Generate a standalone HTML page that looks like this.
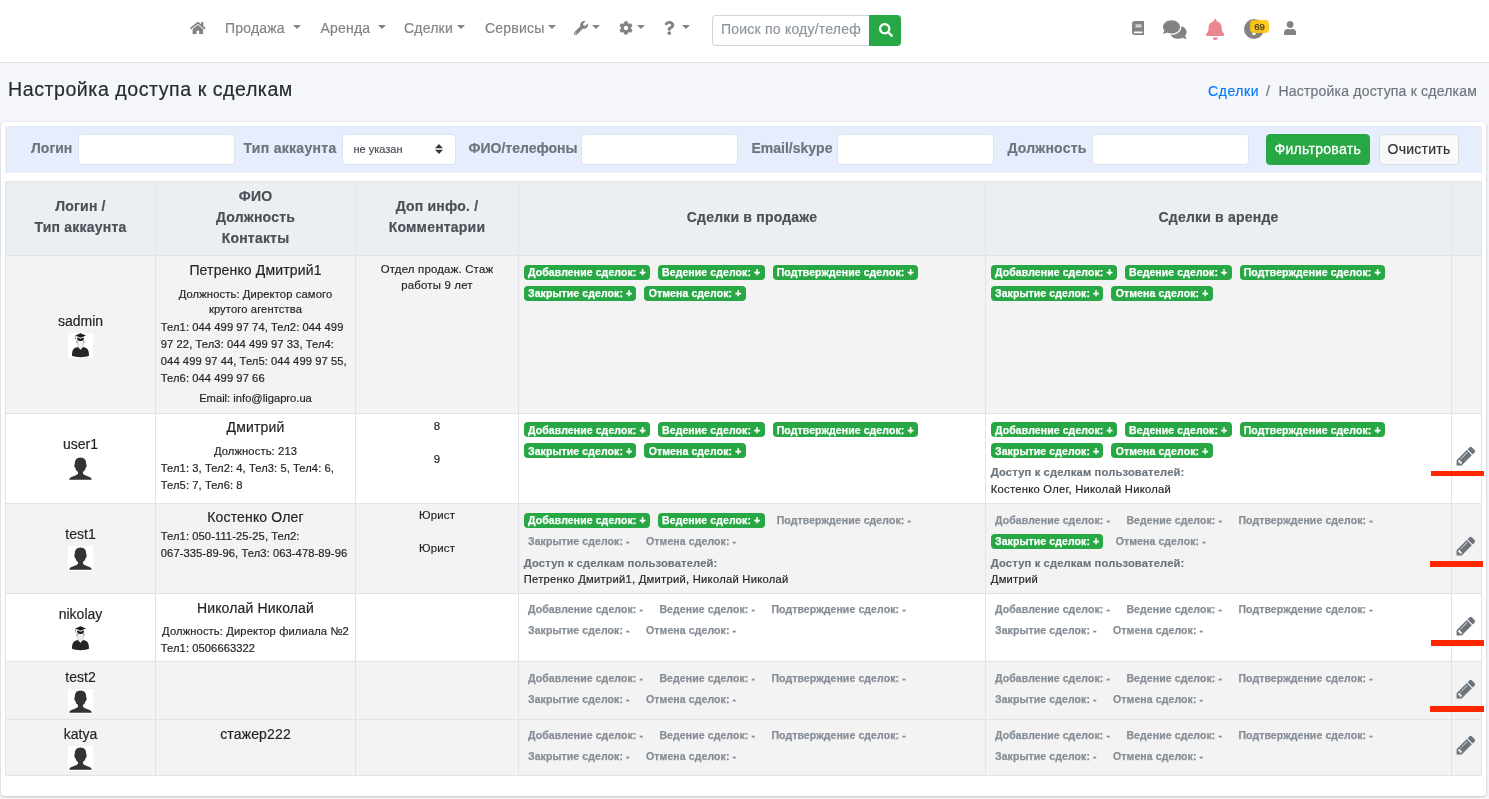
<!DOCTYPE html>
<html lang="ru">
<head>
<meta charset="utf-8">
<title>Настройка доступа к сделкам</title>
<style>
*{box-sizing:border-box}
html,body{margin:0;padding:0}
body{width:1489px;height:799px;overflow:hidden;background:#f4f6f9;font-family:"Liberation Sans",Arial,Helvetica,sans-serif;font-size:14px;line-height:1.5;color:#212529;position:relative;-webkit-text-stroke:.18px currentColor}
.wrap{position:absolute;left:0;top:0;width:1489px;height:799px;will-change:transform}
/* navbar */
.navbar{position:absolute;left:0;top:0;width:1489px;height:63px;background:#fff;border-bottom:1px solid #dee2e6}
.nv{position:absolute;top:18px;height:21px;line-height:21px;color:#838383;white-space:nowrap;font-size:14px;letter-spacing:.2px}
.caret{display:inline-block;width:0;height:0;border-top:4.2px solid #838383;border-left:4.2px solid transparent;border-right:4.2px solid transparent;vertical-align:3.6px;margin-left:3.6px}
.nvi{position:absolute;fill:#838383}
.search{position:absolute;left:712px;top:15px;width:157px;height:31px;border:1px solid #ced4da;border-right:0;border-radius:4px 0 0 4px;background:#fff;color:#8d959c;font-size:14px;line-height:27px;padding-left:8px;white-space:nowrap;overflow:hidden;letter-spacing:.22px}
.sbtn{position:absolute;left:869px;top:15px;width:32px;height:31px;background:#28a745;border-radius:0 4px 4px 0}
.nbadge{position:absolute;left:1250px;top:20px;width:19px;height:13px;border-radius:4px;background:rgba(255,196,12,.9);color:#3a3320;font-size:9.6px;line-height:13px;text-align:center}
/* header */
.title{position:absolute;left:8px;top:73.7px;font-size:19.6px;line-height:30px;color:#272c31;letter-spacing:.54px;white-space:nowrap}
.bc{position:absolute;top:81px;height:21px;line-height:21px;font-size:14px;white-space:nowrap;letter-spacing:.2px}
/* card */
.card{position:absolute;left:1px;top:122px;width:1485px;height:674px;background:#fff;border-radius:4px;box-shadow:0 0 1px rgba(0,0,0,.125),0 1px 3px rgba(0,0,0,.2)}
.filter{position:absolute;left:5px;top:126px;width:1477px;height:47px;background:#e6edfd}
.fl{position:absolute;top:138px;height:21px;line-height:21px;font-weight:700;color:#6c757d;font-size:14px;white-space:nowrap}
.fi{position:absolute;top:134px;height:31px;width:157px;background:#fff;border:1px solid #dde3ec;border-radius:4px}
.btn{position:absolute;top:134px;height:31px;border-radius:4px;font-size:14px;line-height:29px;text-align:center;white-space:nowrap}
.sel span{position:absolute;left:11px;top:-.5px;line-height:29px;font-size:11px;color:#495057}
/* table */
table.t{position:absolute;left:5px;top:181px;width:1476px;border-collapse:collapse;table-layout:fixed;font-size:14px}
.t tr{--d:0px}
.t tr.u1{--d:-1px}
.t tr.u2{--d:-.5px}
.t th,.t td{border:1px solid #e0e4e8;padding:calc(4px + var(--d)) 4.8px 3px;vertical-align:top;text-align:left}
.t th{background:#eceff1;color:#495057;font-weight:700;text-align:center;vertical-align:middle;line-height:21px;padding:3.5px 5px 6.5px;letter-spacing:.2px}
.t tr.g td{background:#f3f3f3}
.t td.c{text-align:center}
.t td.m{vertical-align:middle;text-align:center}
.sm{font-size:11.2px;line-height:16.8px}
.b{display:inline-block;font-size:10.5px;font-weight:700;line-height:10.5px;padding:2.4px 4.2px 2.2px;border-radius:4px;color:#fff;background:#28a745;white-space:nowrap;vertical-align:baseline;margin-right:8px;letter-spacing:.1px;-webkit-text-stroke:.25px currentColor}
.b.n{background:transparent;color:#868e96}

.lg{line-height:21px}
.ic{width:25px;height:25px;display:block;margin:1px auto 0}
.nm{text-align:center;line-height:21px;letter-spacing:.15px}
.pos{text-align:center;line-height:15.7px;margin-top:5.7px;margin-bottom:1.1px;letter-spacing:.12px}
.tel{letter-spacing:.07px;line-height:16.8px}
.tel span{white-space:nowrap}
.em{text-align:center;margin-top:4px;letter-spacing:0}
.t td.com{text-align:center;font-size:11.4px;line-height:16px;padding:calc(5px + var(--d)) 20px 0;letter-spacing:.2px}
.com p{margin:0 0 17px}
.t td.bd{padding-top:calc(4.3px + var(--d))}
.t td.m{padding-bottom:6px}
.t tr.r6 td.m{padding-bottom:4.5px}
.t tr.r1 td.m{padding-bottom:4.6px}
.t tr.r4 td.m{padding-bottom:3px}
.t tr.r5 td.m{padding-top:5px;padding-bottom:5px}
.t tr.r5 td.bd{padding-top:5.3px}
.t tr.r2 td.bd{padding-top:4.5px}
.t tr.r4 td:nth-child(2){padding-top:4px}
.r4 .pos{margin-top:4.7px;margin-bottom:.3px}
.t tr.r3 td.com{padding-top:3.2px}
.t tr.r3 td.bd{padding-top:5px}
.t tr.r1 td.bd{padding-top:5px}
.acc{font-size:11.2px;line-height:16.6px;margin-top:3.5px;letter-spacing:.27px}
.acc b{color:#6c757d;letter-spacing:.14px}
.pen{position:absolute;left:1455.4px;width:22px;height:22px;fill:#6c757d}
.red{position:absolute;background:#ff2600}
</style>
</head>
<body>
<div class="wrap">
<div class="navbar">
<svg class="nvi" style="left:190.2px;top:20.5px;width:15.75px;height:14px" viewBox="0 0 576 512"><path d="M280.37 148.26L96 300.11V464a16 16 0 0 0 16 16l112.060-.29a16 16 0 0 0 15.920-16V368a16 16 0 0 1 16-16h64a16 16 0 0 1 16 16v95.640a16 16 0 0 0 16 16.050L464 480a16 16 0 0 0 16-16V300L295.670 148.260a12.190 12.190 0 0 0-15.300 0zM571.600 251.470L488 182.560V44.050a12 12 0 0 0-12-12h-56a12 12 0 0 0-12 12v72.610L318.470 43a48 48 0 0 0-61 0L4.340 251.470a12 12 0 0 0-1.600 16.900l25.500 31A12 12 0 0 0 45.150 301l235.220-193.740a12.190 12.190 0 0 1 15.300 0L530.900 301a12 12 0 0 0 16.900-1.600l25.500-31a12 12 0 0 0-1.700-16.930z"/></svg>
<div class="nv" style="left:225px">Продажа <span class="caret"></span></div>
<div class="nv" style="left:320.5px">Аренда <span class="caret"></span></div>
<div class="nv" style="left:404px">Сделки<span class="caret"></span></div>
<div class="nv" style="left:485px">Сервисы<span class="caret"></span></div>
<svg class="nvi" style="left:574.4px;top:20.8px;width:14px;height:14px" viewBox="0 0 512 512"><path d="M507.730 109.100c-2.240-9.030-13.540-12.090-20.120-5.510l-74.360 74.360-67.880-11.310-11.310-67.880 74.360-74.360c6.620-6.620 3.430-17.900-5.660-20.160-47.380-11.740-99.550.91-136.580 37.930-39.640 39.640-50.550 97.100-34.050 147.200L18.740 402.760c-24.990 24.990-24.990 65.510 0 90.500 24.990 24.990 65.510 24.990 90.500 0l213.210-213.210c50.120 16.710 107.470 5.680 147.370-34.220 37.070-37.070 49.700-89.320 37.910-136.730zM64 472c-13.250 0-24-10.750-24-24 0-13.260 10.750-24 24-24s24 10.740 24 24c0 13.250-10.750 24-24 24z"/></svg>
<div class="nv" style="left:588.6px"><span class="caret"></span></div>
<svg class="nvi" style="left:619.3px;top:20.6px;width:14px;height:14px" viewBox="0 0 512 512"><path d="M487.400 315.700l-42.600-24.600c4.300-23.200 4.300-47 0-70.200l42.600-24.600c4.900-2.800 7.100-8.600 5.500-14-11.100-35.600-30-67.800-54.700-94.600-3.800-4.100-10-5.100-14.800-2.300L380.800 110c-17.900-15.400-38.500-27.300-60.800-35.100V25.800c0-5.600-3.900-10.500-9.400-11.700-36.700-8.200-74.300-7.800-109.200 0-5.500 1.200-9.400 6.100-9.400 11.700V75c-22.200 7.900-42.800 19.800-60.800 35.100L88.700 85.500c-4.900-2.800-11-1.900-14.800 2.300-24.700 26.700-43.600 58.900-54.700 94.600-1.700 5.400.6 11.200 5.500 14L67.300 221c-4.300 23.200-4.300 47 0 70.200l-42.600 24.600c-4.900 2.800-7.100 8.600-5.500 14 11.100 35.600 30 67.800 54.700 94.600 3.800 4.100 10 5.100 14.800 2.300l42.600-24.600c17.900 15.400 38.500 27.300 60.800 35.100v49.200c0 5.600 3.900 10.500 9.400 11.700 36.700 8.200 74.300 7.800 109.200 0 5.500-1.200 9.400-6.100 9.400-11.700v-49.200c22.200-7.900 42.800-19.800 60.800-35.100l42.600 24.600c4.900 2.800 11 1.900 14.800-2.300 24.700-26.700 43.600-58.900 54.700-94.600 1.500-5.500-.7-11.300-5.600-14.100zM256 336c-44.100 0-80-35.900-80-80s35.900-80 80-80 80 35.900 80 80-35.900 80-80 80z"/></svg>
<div class="nv" style="left:633.2px"><span class="caret"></span></div>
<svg class="nvi" style="left:664.2px;top:20.7px;width:10.5px;height:14px" viewBox="0 0 384 512"><path d="M202.021 0C122.202 0 70.503 32.703 29.914 91.026c-7.363 10.580-5.093 25.086 5.178 32.874l43.138 32.709c10.373 7.865 25.132 6.026 33.253-4.148 25.049-31.381 43.630-49.449 82.757-49.449 30.764 0 68.816 19.799 68.816 49.631 0 22.552-18.617 34.134-48.993 51.164-35.423 19.860-82.299 44.576-82.299 106.405V320c0 13.255 10.745 24 24 24h72.471c13.255 0 24-10.745 24-24v-5.773c0-42.860 125.268-44.645 125.268-160.627C377.504 66.256 286.902 0 202.021 0zM192 373.459c-38.196 0-69.271 31.075-69.271 69.271 0 38.195 31.075 69.270 69.271 69.270s69.271-31.075 69.271-69.271-31.075-69.270-69.271-69.270z"/></svg>
<div class="nv" style="left:678.2px"><span class="caret"></span></div>
<div class="search">Поиск по коду/телеф</div>
<div class="sbtn"><svg style="position:absolute;left:10px;top:8.300px;width:14px;height:14px;fill:#fff" viewBox="0 0 512 512"><path d="M505 442.700L405.300 343c-4.500-4.500-10.600-7-17-7H372c27.600-35.300 44-79.700 44-128C416 93.100 322.900 0 208 0S0 93.100 0 208s93.100 208 208 208c48.300 0 92.700-16.400 128-44v16.300c0 6.400 2.500 12.500 7 17l99.700 99.700c9.400 9.400 24.600 9.400 33.900 0l28.300-28.300c9.400-9.400 9.400-24.600.1-34zM208 336c-70.700 0-128-57.200-128-128 0-70.700 57.200-128 128-128 70.700 0 128 57.200 128 128 0 70.700-57.200 128-128 128z"/></svg></div>
<svg class="nvi" style="left:1131.5px;top:21px;width:12.25px;height:14px" viewBox="0 0 448 512"><path d="M448 360V24c0-13.300-10.700-24-24-24H96C43 0 0 43 0 96v320c0 53 43 96 96 96h328c13.300 0 24-10.700 24-24v-16c0-7.500-3.500-14.300-8.900-18.700-4.200-15.400-4.200-59.300 0-74.700 5.400-4.300 8.900-11.100 8.900-18.600zM128 134c0-3.300 2.700-6 6-6h212c3.300 0 6 2.700 6 6v20c0 3.300-2.700 6-6 6H134c-3.300 0-6-2.700-6-6v-20zm0 64c0-3.300 2.700-6 6-6h212c3.300 0 6 2.700 6 6v20c0 3.300-2.700 6-6 6H134c-3.300 0-6-2.700-6-6v-20zm253.400 250H96c-17.700 0-32-14.300-32-32 0-17.600 14.400-32 32-32h285.400c-1.900 17.100-1.900 46.900 0 64z"/></svg>
<svg class="nvi" style="left:1163px;top:18.5px;width:23.6px;height:21px" viewBox="0 0 576 512"><path d="M416 192c0-88.400-93.100-160-208-160S0 103.600 0 192c0 34.300 14.100 65.900 38 92-13.400 30.200-35.500 54.200-35.800 54.500-2.200 2.300-2.800 5.700-1.500 8.700S4.800 352 8 352c36.600 0 66.900-12.300 88.700-25 32.200 15.700 70.300 25 111.300 25 114.900 0 208-71.600 208-160zm122 220c23.900-26 38-57.700 38-92 0-66.900-53.500-124.200-129.300-148.100.9 6.600 1.300 13.300 1.300 20.100 0 105.900-107.700 192-240 192-10.800 0-21.300-.8-31.700-1.900C207.800 439.600 281.800 480 368 480c41 0 79.100-9.200 111.300-25 21.800 12.700 52.100 25 88.700 25 3.200 0 6.100-1.900 7.300-4.800 1.300-2.900.7-6.300-1.500-8.700-.3-.3-22.400-24.200-35.800-54.500z"/></svg>
<svg class="nvi" style="left:1206px;top:18.5px;width:18.4px;height:21px;fill:#ea868f" viewBox="0 0 448 512"><path d="M224 512c35.320 0 63.970-28.650 63.970-64H160.030c0 35.350 28.650 64 63.970 64zm215.390-149.710c-19.320-20.760-55.470-51.990-55.470-154.290 0-77.700-54.480-139.900-127.940-155.160V32c0-17.670-14.320-32-31.980-32s-31.980 14.330-31.980 32v20.840C118.560 68.100 64.080 130.300 64.080 208c0 102.300-36.150 133.530-55.470 154.290-6 6.450-8.660 14.160-8.610 21.710.11 16.400 12.980 32 32.100 32h383.800c19.120 0 32-15.600 32.100-32 .05-7.550-2.610-15.270-8.610-21.710z"/></svg>
<svg class="nvi" style="left:1244px;top:19px;width:20px;height:20px" viewBox="0 0 20 20"><circle cx="10" cy="10" r="10"/><circle cx="10" cy="14.6" r="1.7" fill="#fff"/><rect x="8.6" y="4" width="2.8" height="7.5" rx="1" fill="#fff"/></svg>
<div class="nbadge">69</div>
<svg class="nvi" style="left:1284px;top:21px;width:12.25px;height:14px" viewBox="0 0 448 512"><path d="M224 256c70.700 0 128-57.300 128-128S294.700 0 224 0 96 57.300 96 128s57.300 128 128 128zm89.600 32h-16.700c-22.200 10.200-46.900 16-72.900 16s-50.600-5.800-72.900-16h-16.700C60.200 288 0 348.200 0 422.400V464c0 26.500 21.500 48 48 48h352c26.500 0 48-21.500 48-48v-41.600c0-74.200-60.200-134.400-134.400-134.400z"/></svg>
</div>
<div class="title">Настройка доступа к сделкам</div>
<div class="bc" style="left:1208px;color:#007bff;letter-spacing:.55px">Сделки</div>
<div class="bc" style="left:1266px;color:#6c757d">/</div>
<div class="bc" style="left:1278.5px;color:#6c757d">Настройка доступа к сделкам</div>
<div class="card"></div>
<div class="filter"></div>
<div class="fl" style="left:31px">Логин</div>
<div class="fi" style="left:77.500px"></div>
<div class="fl" style="left:243.500px;letter-spacing:.3px">Тип аккаунта</div>
<div class="fi sel" style="left:341.500px;width:114px"><span>не указан</span><svg viewBox="0 0 8 10" style="position:absolute;left:92px;top:9px;width:8px;height:10px"><path d="M0 4.200 4 0l4 4.200zM0 5.800 4 10l4-4.200z" fill="#343a40"/></svg></div>
<div class="fl" style="left:468.500px">ФИО/телефоны</div>
<div class="fi" style="left:581px"></div>
<div class="fl" style="left:751.500px">Email/skype</div>
<div class="fi" style="left:836.500px"></div>
<div class="fl" style="left:1007.500px;letter-spacing:.2px">Должность</div>
<div class="fi" style="left:1091.500px"></div>
<div class="btn" style="left:1265.500px;width:104.500px;background:#28a745;border:1px solid #28a745;color:#fff;letter-spacing:.3px;-webkit-text-stroke:.3px #fff">Фильтровать</div>
<div class="btn" style="left:1379px;width:80px;background:#f8f9fa;border:1px solid #ddd;color:#333;letter-spacing:.25px">Очистить</div>
<table class="t"><colgroup><col style="width:150px"><col style="width:200px"><col style="width:163px"><col style="width:467px"><col style="width:466px"><col style="width:30px"></colgroup>
<tr style="height:74px"><th>Логин /<br>Тип аккаунта</th><th>ФИО<br>Должность<br>Контакты</th><th>Доп инфо. /<br>Комментарии</th><th>Сделки в продаже</th><th>Сделки в аренде</th><th></th></tr>
<tr class="g r1" style="height:158px">
<td class="m"><div class="lg">sadmin</div><svg class="ic" viewBox="0 0 25 25"><rect width="25" height="25" fill="#fff"/><path fill="#262626" d="M4 22.800C4 18 5 15.500 8 14.600l2-.7 2.500 2.900 2.500-2.900 2 .7c3 .9 4 3.400 4 8.200-3 1.800-14 1.800-17 0z"/><path fill="#f0f0f0" stroke="#a8a8a8" stroke-width=".5" d="M9.400 7.300c-.4 2.700.2 4.900 1 5.900l-.2.800 2.300 2.600 2.300-2.600-.2-.8c.8-1 1.400-3.200 1-5.900z"/><path fill="#8c8c8c" d="M8.500 7.400h1v3.200c-.7-.5-1.100-1.800-1-3.200zM16.500 7.400h-1v3.200c.7-.5 1.100-1.800 1-3.200z"/><path fill="#1c1c1c" d="M9.200 4.300l3.300 1.500 3.300-1.500v2.100c-1.300 1.200-2.300 1.500-3.300 1.500s-2-.3-3.300-1.500z"/><path fill="#1c1c1c" d="M12.500.25 18 2.500l-5.500 2.250L7.270 2.500z"/><path d="M7.700 2.700 7.300 6.500" stroke="#777" stroke-width=".7" fill="none"/></svg></td>
<td><div class="nm">Петренко Дмитрий1</div><div class="sm pos">Должность: Директор самого крутого агентства</div><div class="sm tel">Тел1: 044 499 97 74, Тел2: 044 499 97 22, Тел3: 044 499 97 33, Тел4: 044 499 97 44, Тел5: 044 499 97 55, Тел6: 044 499 97 66</div><div class="sm em">Email: info@ligapro.ua</div></td>
<td class="com"><p>Отдел продаж. Стаж работы 9 лет</p></td>
<td class="bd"><span class="b">Добавление сделок: +</span><span class="b">Ведение сделок: +</span><span class="b">Подтверждение сделок: +</span><br><span class="b">Закрытие сделок: +</span><span class="b">Отмена сделок: +</span></td>
<td class="bd"><span class="b">Добавление сделок: +</span><span class="b">Ведение сделок: +</span><span class="b">Подтверждение сделок: +</span><br><span class="b">Закрытие сделок: +</span><span class="b">Отмена сделок: +</span></td>
<td></td></tr>
<tr class="u1 r2" style="height:90px">
<td class="m"><div class="lg">user1</div><svg class="ic" viewBox="0 0 25 25"><rect width="25" height="25" fill="#fff"/><path fill="#333" transform="translate(0 1.02) scale(1 .963)" d="M12.5 .5C8.500 .5 6.800 3.500 6.800 7c0 1-.6 1.200-.5 2.200.1 1.200.7 1.400 1 2.100.5 1.900 1.500 3.300 2.700 4.300v1.900c-1 1.500-4 2.300-6.500 3.300-1.500.7-2.100 1.500-2.200 2.700h22.400c-.1-1.200-.7-2-2.200-2.700-2.500-1-5.500-1.800-6.500-3.300v-1.900c1.200-1 2.200-2.400 2.700-4.300.3-.7.900-.9 1-2.100.1-1-.5-1.200-.5-2.200C18.200 3.500 16.500.5 12.500.5z"/></svg></td>
<td><div class="nm">Дмитрий</div><div class="sm pos">Должность: 213</div><div class="sm tel">Тел1: 3, Тел2: 4, Тел3: 5, Тел4: 6, Тел5: 7, Тел6: 8</div></td>
<td class="com"><p>8</p><p>9</p></td>
<td class="bd"><span class="b">Добавление сделок: +</span><span class="b">Ведение сделок: +</span><span class="b">Подтверждение сделок: +</span><br><span class="b">Закрытие сделок: +</span><span class="b">Отмена сделок: +</span></td>
<td class="bd"><span class="b">Добавление сделок: +</span><span class="b">Ведение сделок: +</span><span class="b">Подтверждение сделок: +</span><br><span class="b">Закрытие сделок: +</span><span class="b">Отмена сделок: +</span><div class="acc"><b>Доступ к сделкам пользователей:</b><br>Костенко Олег, Николай Николай</div></td>
<td></td></tr>
<tr class="g u1 r3" style="height:90px">
<td class="m"><div class="lg">test1</div><svg class="ic" viewBox="0 0 25 25"><rect width="25" height="25" fill="#fff"/><path fill="#333" transform="translate(0 1.02) scale(1 .963)" d="M12.5 .5C8.500 .5 6.800 3.500 6.800 7c0 1-.6 1.200-.5 2.200.1 1.200.7 1.400 1 2.100.5 1.900 1.500 3.300 2.700 4.300v1.900c-1 1.500-4 2.300-6.500 3.300-1.500.7-2.100 1.500-2.200 2.700h22.400c-.1-1.200-.7-2-2.200-2.700-2.500-1-5.500-1.800-6.500-3.300v-1.900c1.200-1 2.200-2.400 2.700-4.300.3-.7.900-.9 1-2.100.1-1-.5-1.200-.5-2.200C18.200 3.500 16.500.5 12.500.5z"/></svg></td>
<td><div class="nm">Костенко Олег</div><div class="sm tel">Тел1: <span>050-111-25-25</span>, Тел2: <span>067-335-89-96</span>, Тел3: <span>063-478-89-96</span></div></td>
<td class="com"><p>Юрист</p><p>Юрист</p></td>
<td class="bd"><span class="b">Добавление сделок: +</span><span class="b">Ведение сделок: +</span><span class="b n">Подтверждение сделок: -</span><br><span class="b n">Закрытие сделок: -</span><span class="b n">Отмена сделок: -</span><div class="acc"><b>Доступ к сделкам пользователей:</b><br>Петренко Дмитрий1, Дмитрий, Николай Николай</div></td>
<td class="bd"><span class="b n">Добавление сделок: -</span><span class="b n">Ведение сделок: -</span><span class="b n">Подтверждение сделок: -</span><br><span class="b">Закрытие сделок: +</span><span class="b n">Отмена сделок: -</span><div class="acc"><b>Доступ к сделкам пользователей:</b><br>Дмитрий</div></td>
<td></td></tr>
<tr class="u2 r4" style="height:68px">
<td class="m"><div class="lg">nikolay</div><svg class="ic" viewBox="0 0 25 25"><rect width="25" height="25" fill="#fff"/><path fill="#262626" d="M4 22.800C4 18 5 15.500 8 14.600l2-.7 2.500 2.900 2.500-2.900 2 .7c3 .9 4 3.400 4 8.200-3 1.800-14 1.800-17 0z"/><path fill="#f0f0f0" stroke="#a8a8a8" stroke-width=".5" d="M9.400 7.300c-.4 2.700.2 4.900 1 5.900l-.2.800 2.300 2.600 2.300-2.600-.2-.8c.8-1 1.400-3.200 1-5.900z"/><path fill="#8c8c8c" d="M8.500 7.400h1v3.200c-.7-.5-1.100-1.800-1-3.200zM16.500 7.400h-1v3.200c.7-.5 1.100-1.800 1-3.200z"/><path fill="#1c1c1c" d="M9.200 4.300l3.300 1.500 3.300-1.500v2.100c-1.300 1.200-2.300 1.500-3.300 1.500s-2-.3-3.300-1.500z"/><path fill="#1c1c1c" d="M12.500.25 18 2.500l-5.500 2.250L7.270 2.500z"/><path d="M7.700 2.700 7.300 6.500" stroke="#777" stroke-width=".7" fill="none"/></svg></td>
<td><div class="nm">Николай Николай</div><div class="sm pos">Должность: Директор филиала №2</div><div class="sm tel">Тел1: 0506663322</div></td>
<td class="com"></td>
<td class="bd"><span class="b n">Добавление сделок: -</span><span class="b n">Ведение сделок: -</span><span class="b n">Подтверждение сделок: -</span><br><span class="b n">Закрытие сделок: -</span><span class="b n">Отмена сделок: -</span></td>
<td class="bd"><span class="b n">Добавление сделок: -</span><span class="b n">Ведение сделок: -</span><span class="b n">Подтверждение сделок: -</span><br><span class="b n">Закрытие сделок: -</span><span class="b n">Отмена сделок: -</span></td>
<td></td></tr>
<tr class="g r5" style="height:58px">
<td class="m"><div class="lg">test2</div><svg class="ic" viewBox="0 0 25 25"><rect width="25" height="25" fill="#fff"/><path fill="#333" transform="translate(0 1.02) scale(1 .963)" d="M12.5 .5C8.500 .5 6.800 3.500 6.800 7c0 1-.6 1.200-.5 2.200.1 1.200.7 1.400 1 2.100.5 1.900 1.500 3.300 2.700 4.300v1.900c-1 1.500-4 2.300-6.500 3.300-1.500.7-2.100 1.500-2.200 2.700h22.400c-.1-1.200-.7-2-2.200-2.700-2.500-1-5.500-1.800-6.500-3.300v-1.900c1.200-1 2.200-2.400 2.700-4.300.3-.7.900-.9 1-2.100.1-1-.5-1.200-.5-2.200C18.200 3.500 16.500.5 12.500.5z"/></svg></td>
<td></td>
<td class="com"></td>
<td class="bd"><span class="b n">Добавление сделок: -</span><span class="b n">Ведение сделок: -</span><span class="b n">Подтверждение сделок: -</span><br><span class="b n">Закрытие сделок: -</span><span class="b n">Отмена сделок: -</span></td>
<td class="bd"><span class="b n">Добавление сделок: -</span><span class="b n">Ведение сделок: -</span><span class="b n">Подтверждение сделок: -</span><br><span class="b n">Закрытие сделок: -</span><span class="b n">Отмена сделок: -</span></td>
<td></td></tr>
<tr class="g u2 r6" style="height:56px">
<td class="m"><div class="lg">katya</div><svg class="ic" viewBox="0 0 25 25"><rect width="25" height="25" fill="#fff"/><path fill="#333" transform="translate(0 1.02) scale(1 .963)" d="M12.5 .5C8.500 .5 6.800 3.500 6.800 7c0 1-.6 1.200-.5 2.200.1 1.200.7 1.400 1 2.100.5 1.900 1.500 3.300 2.700 4.300v1.900c-1 1.500-4 2.300-6.500 3.300-1.500.7-2.100 1.500-2.200 2.700h22.400c-.1-1.200-.7-2-2.200-2.700-2.500-1-5.500-1.800-6.500-3.300v-1.900c1.200-1 2.200-2.400 2.700-4.300.3-.7.900-.9 1-2.100.1-1-.5-1.200-.5-2.200C18.200 3.500 16.500.5 12.500.5z"/></svg></td>
<td><div class="nm">стажер222</div></td>
<td class="com"></td>
<td class="bd"><span class="b n">Добавление сделок: -</span><span class="b n">Ведение сделок: -</span><span class="b n">Подтверждение сделок: -</span><br><span class="b n">Закрытие сделок: -</span><span class="b n">Отмена сделок: -</span></td>
<td class="bd"><span class="b n">Добавление сделок: -</span><span class="b n">Ведение сделок: -</span><span class="b n">Подтверждение сделок: -</span><br><span class="b n">Закрытие сделок: -</span><span class="b n">Отмена сделок: -</span></td>
<td></td></tr>
</table>
<svg class="pen" style="top:444.8px" viewBox="0 0 1792 1792"><path d="M491 1536l91-91-235-235-91 91v107h128v128h107zm523-928q0-22-22-22-10 0-17 7l-542 542q-7 7-7 17 0 22 22 22 10 0 17-7l542-542q7-7 7-17zm-54-192l416 416-832 832h-416v-416zm683 96q0 53-37 90l-166 166-416-416 166-165q36-38 90-38 53 0 91 38l235 234q37 39 37 91z"/></svg>
<svg class="pen" style="top:534.8px" viewBox="0 0 1792 1792"><path d="M491 1536l91-91-235-235-91 91v107h128v128h107zm523-928q0-22-22-22-10 0-17 7l-542 542q-7 7-7 17 0 22 22 22 10 0 17-7l542-542q7-7 7-17zm-54-192l416 416-832 832h-416v-416zm683 96q0 53-37 90l-166 166-416-416 166-165q36-38 90-38 53 0 91 38l235 234q37 39 37 91z"/></svg>
<svg class="pen" style="top:614.9px" viewBox="0 0 1792 1792"><path d="M491 1536l91-91-235-235-91 91v107h128v128h107zm523-928q0-22-22-22-10 0-17 7l-542 542q-7 7-7 17 0 22 22 22 10 0 17-7l542-542q7-7 7-17zm-54-192l416 416-832 832h-416v-416zm683 96q0 53-37 90l-166 166-416-416 166-165q36-38 90-38 53 0 91 38l235 234q37 39 37 91z"/></svg>
<svg class="pen" style="top:678.2px" viewBox="0 0 1792 1792"><path d="M491 1536l91-91-235-235-91 91v107h128v128h107zm523-928q0-22-22-22-10 0-17 7l-542 542q-7 7-7 17 0 22 22 22 10 0 17-7l542-542q7-7 7-17zm-54-192l416 416-832 832h-416v-416zm683 96q0 53-37 90l-166 166-416-416 166-165q36-38 90-38 53 0 91 38l235 234q37 39 37 91z"/></svg>
<svg class="pen" style="top:733.8px" viewBox="0 0 1792 1792"><path d="M491 1536l91-91-235-235-91 91v107h128v128h107zm523-928q0-22-22-22-10 0-17 7l-542 542q-7 7-7 17 0 22 22 22 10 0 17-7l542-542q7-7 7-17zm-54-192l416 416-832 832h-416v-416zm683 96q0 53-37 90l-166 166-416-416 166-165q36-38 90-38 53 0 91 38l235 234q37 39 37 91z"/></svg>
<div class="red" style="left:1431.3px;top:470.6px;width:52.3px;height:5.8px"></div>
<div class="red" style="left:1430px;top:560.8px;width:53.0px;height:6.4px"></div>
<div class="red" style="left:1431px;top:639.9px;width:53.0px;height:5.8px"></div>
<div class="red" style="left:1430.4px;top:705.6px;width:53.4px;height:6.1px"></div>
</div>
</body>
</html>
